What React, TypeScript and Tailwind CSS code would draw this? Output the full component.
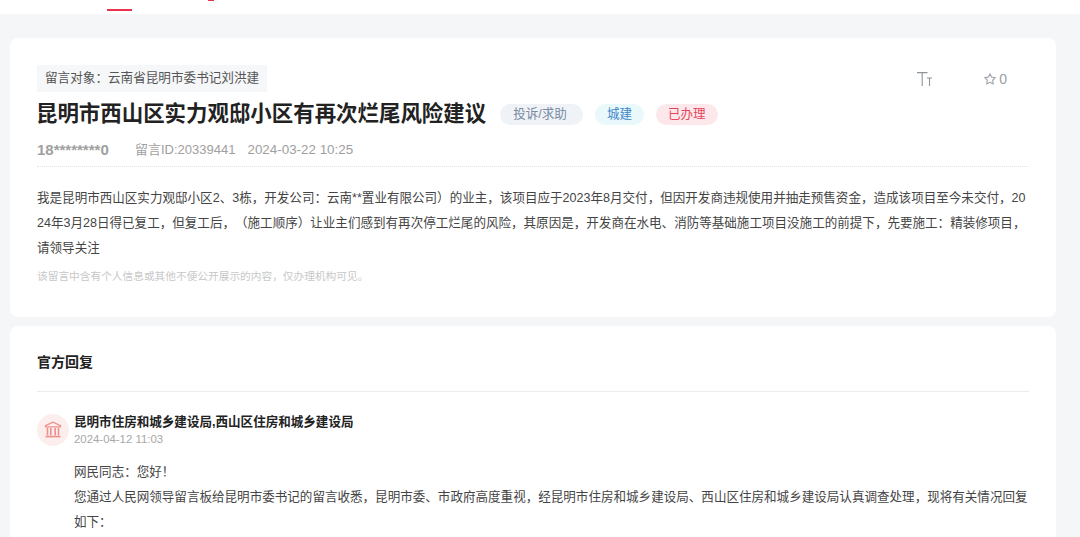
const cjk = "font-['Liberation_Sans','Noto_Sans_CJK_SC',sans-serif] [text-spacing-trim:space-all]";

function Bank() {
  return (
    <svg width="20" height="20" viewBox="0 0 20 20" fill="none" stroke="#ee8f8a" strokeWidth="1.3">
      <path d="M10 2.2 2.5 5.6v1.2h15V5.6L10 2.2Z" />
      <path d="M4.5 8v7.5M7.8 8v7.5M12.2 8v7.5M15.5 8v7.5" strokeWidth="1.6" />
      <path d="M2.5 16.6h15" strokeWidth="1.6" />
    </svg>
  );
}

function FontSizeIcon() {
  return (
    <svg width="15" height="14" viewBox="0 0 15 14" fill="none" stroke="#8f949b" strokeWidth="1.1">
      <path d="M0 .6h10.5M5.2.6V14" />
      <path d="M10 6h5M12.5 6v8" />
    </svg>
  );
}

function Tag({ className, children }: { className: string; children: string }) {
  return <span className={`h-[21px] rounded-full text-[12.55px] leading-[21px] ${className}`}>{children}</span>;
}

export default function App() {
  return (
    <div className={`h-[537px] overflow-hidden bg-[#f5f6f8] ${cjk}`}>
      <div className="h-[14px] bg-white flex items-end pl-[107px] pb-[3px] gap-[76px]">
        <div className="w-[25px] h-[2px] bg-[#e8344c]" />
        <div className="w-[6px] h-[1px] mb-[10px] bg-[#e8344c]" />
      </div>

      <main className="pt-[24px] pl-[10px] pr-[24px] flex flex-col gap-[9px]">
        <section className="h-[279px] bg-white rounded-[8px] pt-[27px] px-[27px] flex flex-col">
          <div className="flex items-start justify-between">
            <div className="h-[27px] px-[8px] bg-[#f6f7f9] text-[12.6px] leading-[27px] text-[#555]">留言对象：云南省昆明市委书记刘洪建</div>
            <div className="flex items-center text-[#9a9fa6] pt-[4px] pr-[22px]">
              <FontSizeIcon />
              <svg className="ml-[51px]" width="14" height="14" viewBox="0 0 24 24" fill="none" stroke="#a4a8ae" strokeWidth="2" strokeLinejoin="round">
                <path d="m12 3 2.8 5.8 6.3.9-4.6 4.4 1.1 6.3L12 17.4l-5.6 3 1.1-6.3-4.6-4.4 6.3-.9L12 3Z" />
              </svg>
              <span className="ml-[2px] text-[14px] leading-[20px]">0</span>
            </div>
          </div>
          <div className="mt-[4px] flex items-center h-[36px]">
            <h1 className="-ml-[1px] text-[21.45px] font-bold leading-[36px] text-[#222]">昆明市西山区实力观邸小区有再次烂尾风险建议</h1>
            <div className="ml-[14px] pt-[1px] flex items-center gap-[12px]">
              <Tag className="pl-[13px] pr-[16px] bg-[#eff3f8] text-[#7a8aa0]">投诉/求助</Tag>
              <Tag className="px-[12px] bg-[#e9f8fb] text-[#3f86c9]">城建</Tag>
              <Tag className="px-[12px] bg-[#fce8ea] text-[#e6455c]">已办理</Tag>
            </div>
          </div>
          <div className="mt-[6px] h-[24px] pb-[4px] box-content flex items-center text-[13px] text-[#a0a0a0] border-b border-dotted border-[#e4e4e4]">
            <span className="font-bold text-[15px] w-[98px]">18********0</span>
            <span>留言ID:20339441</span>
            <span className="ml-[12px] text-[13.4px]">2024-03-22 10:25</span>
          </div>
          <p className="mt-[19px] text-[12.55px] leading-[25px] text-[#444] break-all">
            我是昆明市西山区实力观邸小区2、3栋，开发公司：云南**置业有限公司）的业主，该项目应于2023年8月交付，但因开发商违规使用并抽走预售资金，造成该项目至今未交付，2024年3月28日得已复工，但复工后，（施工顺序）让业主们感到有再次停工烂尾的风险，其原因是，开发商在水电、消防等基础施工项目没施工的前提下，先要施工：精装修项目，请领导关注
          </p>
          <p className="mt-[7px] text-[10.7px] leading-[16px] text-[#c8c8c8]">该留言中含有个人信息或其他不便公开展示的内容，仅办理机构可见。</p>
        </section>

        <section className="h-[300px] bg-white rounded-[8px] pt-[25px] px-[27px]">
          <h2 className="text-[14px] font-bold leading-[22px] text-[#222] pb-[18px] border-b border-[#ececec]">官方回复</h2>
          <div className="mt-[21px] flex items-center gap-[5px]">
            <div className="w-[32px] h-[32px] rounded-full bg-[#fdeeee] flex items-center justify-center"><Bank /></div>
            <div>
              <div className="text-[12.55px] font-bold leading-[18px] text-[#222]">昆明市住房和城乡建设局,西山区住房和城乡建设局</div>
              <div className="text-[11.4px] leading-[16px] text-[#a8a8a8]">2024-04-12 11:03</div>
            </div>
          </div>
          <p className="mt-[13px] ml-[37px] text-[12.55px] leading-[25px] text-[#444] break-all">
            网民同志：您好！<br />
            您通过人民网领导留言板给昆明市委书记的留言收悉，昆明市委、市政府高度重视，经昆明市住房和城乡建设局、西山区住房和城乡建设局认真调查处理，现将有关情况回复如下：
          </p>
        </section>
      </main>
    </div>
  );
}
